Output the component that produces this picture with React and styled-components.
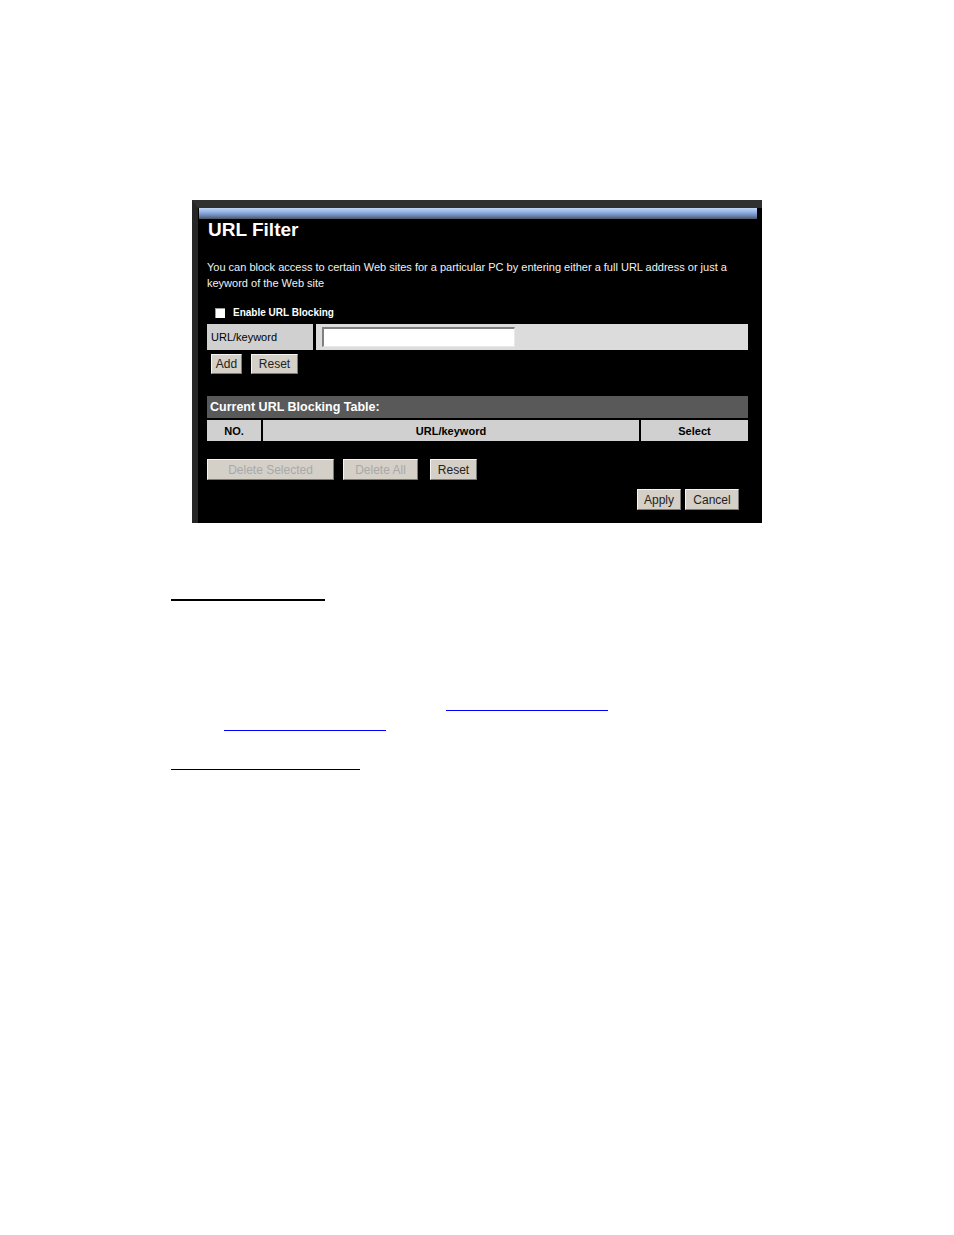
import React from "react";
import styled, { createGlobalStyle } from "styled-components";

const GlobalStyle = createGlobalStyle`
  html, body {
    margin: 0;
    padding: 0;
    background: #fff;
  }
  body {
    font-family: "Liberation Sans", Arial, sans-serif;
  }
  * {
    box-sizing: border-box;
  }
`;

const Page = styled.div`
  width: 954px;
  min-height: 1235px;
  padding-top: 200px;
`;

const Shot = styled.div`
  margin-left: 192px;
  width: 570px;
  height: 323px;
  overflow: hidden;
  background: #000;
  border-top: 8px solid #303030;
  border-left: 6px solid #262626;
  color: #fff;
`;

const TitleBar = styled.div`
  margin-left: 1px;
  width: 558px;
  height: 11px;
  background: linear-gradient(#c3d6f5 0%, #8eaee4 40%, #6d86b6 70%, #4e5560 100%);
`;

const Content = styled.div`
  padding-left: 9px;
  width: 550px;
`;

const Title = styled.h1`
  margin: 0 0 0 1px;
  font-size: 19px;
  line-height: 22px;
  font-weight: bold;
  color: #fff;
`;

const Intro = styled.p`
  margin: 18px 0 0 0;
  width: 525px;
  font-size: 11px;
  line-height: 16px;
  color: #f2f2f2;
`;

const CheckRow = styled.label`
  margin-top: 16px;
  height: 11px;
  display: flex;
  align-items: center;
  font-size: 10px;
  font-weight: bold;
  line-height: 11px;
`;

const Box = styled.span`
  width: 10px;
  height: 10px;
  margin-left: 8px;
  margin-right: 8px;
  background: #fff;
  border-top: 1px solid #9a9a9a;
  border-left: 1px solid #9a9a9a;
`;

const FormRow = styled.div`
  margin-top: 6px;
  width: 541px;
  height: 26px;
  display: grid;
  grid-template-columns: 106px 1fr;
  column-gap: 3px;
`;

const Cell = styled.div`
  background: ${(p) => (p.$light ? "#dcdcdc" : "#d0d0d0")};
  color: #000;
  display: flex;
  align-items: center;
  justify-content: ${(p) => p.$align || "flex-start"};
  padding-left: ${(p) => (p.$align || p.$light ? "0" : "4px")};
  font-size: 11px;
  font-weight: ${(p) => (p.$bold ? "bold" : "normal")};
`;

const TextInput = styled.div`
  margin-left: 6px;
  width: 193px;
  height: 20px;
  background: #fff;
  border-top: 2px solid #808080;
  border-left: 2px solid #808080;
  border-right: 1px solid #e8e8e8;
  border-bottom: 1px solid #e8e8e8;
`;

const ButtonRow = styled.div`
  margin-top: ${(p) => p.$top}px;
  width: 541px;
  display: flex;
  gap: ${(p) => p.$gap || 9}px;
  padding-left: ${(p) => p.$indent || 0}px;
  padding-right: ${(p) => p.$right || 0}px;
  justify-content: ${(p) => (p.$end ? "flex-end" : "flex-start")};
`;

const Button = styled.button`
  width: ${(p) => p.$w}px;
  height: ${(p) => p.$h || 21}px;
  margin-right: ${(p) => p.$after || 0}px;
  padding: 0;
  background: #d4d0c8;
  color: ${(p) => (p.disabled ? "#a8a8a8" : "#222")};
  font-family: "Liberation Sans", Arial, sans-serif;
  font-size: 12px;
  border-top: 1px solid #f4f4f4;
  border-left: 1px solid #f4f4f4;
  border-right: 1px solid #7a7a7a;
  border-bottom: 1px solid #7a7a7a;
  cursor: default;
`;

const TableTitle = styled.div`
  margin-top: 22px;
  width: 541px;
  height: 22px;
  padding-left: 3px;
  background: #595959;
  display: flex;
  align-items: center;
  font-size: 12.5px;
  font-weight: bold;
  color: #fff;
`;

const HeadRow = styled.div`
  margin-top: 2px;
  width: 541px;
  height: 21px;
  display: grid;
  grid-template-columns: 54px 376px 1fr;
  column-gap: 2px;
`;

const Notes = styled.div`
  padding-left: 171px;
`;

const Rule = styled.div`
  width: ${(p) => p.$w}px;
  margin-top: ${(p) => p.$top}px;
  margin-left: ${(p) => p.$indent || 0}px;
  border-bottom: ${(p) => p.$thick || 1}px solid ${(p) => p.$color || "#000"};
`;

export default function App() {
  return (
    <Page>
      <GlobalStyle />
      <Shot>
        <TitleBar />
        <Content>
          <Title>URL Filter</Title>
          <Intro>
            You can block access to certain Web sites for a particular PC by
            entering either a full URL address or just a keyword of the Web site
          </Intro>
          <CheckRow>
            <Box />
            Enable URL Blocking
          </CheckRow>
          <FormRow>
            <Cell>URL/keyword</Cell>
            <Cell $light>
              <TextInput />
            </Cell>
          </FormRow>
          <ButtonRow $top={4} $indent={4}>
            <Button $w={31} $h={20}>Add</Button>
            <Button $w={47} $h={20}>Reset</Button>
          </ButtonRow>
          <TableTitle>Current URL Blocking Table:</TableTitle>
          <HeadRow>
            <Cell $bold $align="center">NO.</Cell>
            <Cell $bold $align="center">URL/keyword</Cell>
            <Cell $bold $align="center">Select</Cell>
          </HeadRow>
          <ButtonRow $top={18}>
            <Button $w={127} disabled>Delete Selected</Button>
            <Button $w={75} $after={3} disabled>Delete All</Button>
            <Button $w={47}>Reset</Button>
          </ButtonRow>
          <ButtonRow $top={9} $end $gap={4} $right={9}>
            <Button $w={44}>Apply</Button>
            <Button $w={54}>Cancel</Button>
          </ButtonRow>
        </Content>
      </Shot>
      <Notes>
        <Rule $w={154} $top={76} $thick={2} />
        <Rule $w={162} $top={109} $indent={275} $color="#0000ff" />
        <Rule $w={162} $top={19} $indent={53} $color="#0000ff" />
        <Rule $w={189} $top={38} />
      </Notes>
    </Page>
  );
}
